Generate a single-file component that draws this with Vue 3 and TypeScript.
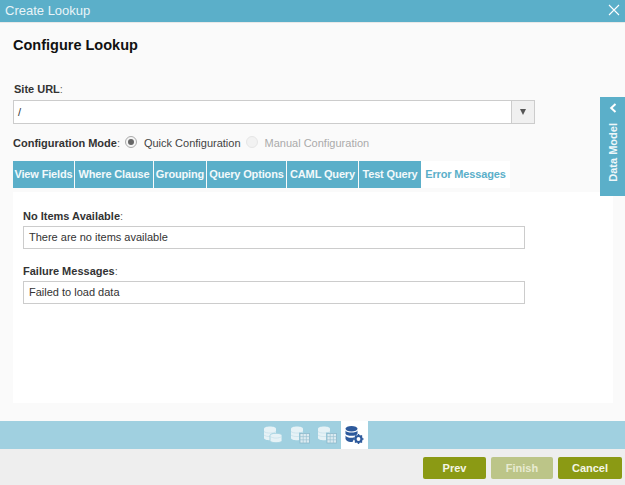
<template>
  <div class="dialog">
    <header class="titlebar">
      <span>Create Lookup</span>
      <svg class="close" width="12" height="12" viewBox="0 0 12 12">
        <path d="M1 1 L11 11 M11 1 L1 11" stroke="#fff" stroke-width="1.1" fill="none" />
      </svg>
    </header>

    <main class="body">
      <h2>Configure Lookup</h2>

      <label class="field-label site-label">Site URL<span class="colon">:</span></label>
      <div class="combo">
        <div class="combo-value">/</div>
        <div class="combo-btn"><i class="caret"></i></div>
      </div>

      <div class="mode-row">
        <span class="field-label">Configuration Mode<span class="colon">:</span></span>
        <span class="radio checked"><i></i></span>
        <span class="radio-text">Quick Configuration</span>
        <span class="radio disabled"></span>
        <span class="radio-text off">Manual Configuration</span>
      </div>

      <div class="tabs">
        <div
          v-for="tab in tabs"
          :key="tab.name"
          class="tab"
          :class="{ active: tab.name === activeTab }"
          :style="{ width: tab.width + 'px' }"
        >
          {{ tab.name }}
        </div>
      </div>

      <section class="panel">
        <div v-for="item in messages" :key="item.label" class="message">
          <div class="field-label">{{ item.label }}<span class="colon">:</span></div>
          <div class="text-input">{{ item.value }}</div>
        </div>
      </section>

      <aside class="data-model">
        <svg width="8" height="10" viewBox="0 0 8 10">
          <path d="M6.5 1 L2.2 5 L6.5 9" stroke="#fff" stroke-width="2" fill="none" />
        </svg>
        <span>Data Model</span>
      </aside>
    </main>

    <nav class="stepbar">
      <div v-for="step in 3" :key="step" class="step">
        <svg width="22" height="22" viewBox="0 0 22 22">
          <g fill="#e6f2f6">
            <path d="M2 5 C2 1.8 14 1.8 14 5 V14 C14 17 2 17 2 14 Z" />
          </g>
          <path d="M2 7.5 C4 9.6 12 9.6 14 7.5 M2 11 C4 13.1 12 13.1 14 11" stroke="#c4e0e9" stroke-width="0.7" fill="none" />
          <g v-if="step === 1">
            <path d="M8 11.5 C8 8.5 20 8.5 20 11.5 V16.5 C20 19.5 8 19.5 8 16.5 Z" fill="#e6f2f6" stroke="#a0d0e0" stroke-width="0.9" />
            <path d="M8.5 12.5 C10.5 14.6 17.5 14.6 19.5 12.5" stroke="#c4e0e9" stroke-width="0.7" fill="none" />
          </g>
          <g v-else>
            <rect x="10" y="8.5" width="11.5" height="11" fill="#a0d0e0" />
            <rect x="11" y="9.5" width="9.5" height="9.5" fill="#dcebf1" stroke="#86b4c6" stroke-width="0.7" />
            <path d="M14.2 9.5 V19 M17.4 9.5 V19 M11 12.6 H20.5 M11 15.8 H20.5" stroke="#9cc3d2" stroke-width="0.7" />
          </g>
        </svg>
      </div>
      <div class="step current">
        <svg width="22" height="22" viewBox="0 0 22 22">
          <g fill="#2e5a9c">
            <ellipse cx="8.5" cy="4.8" rx="6" ry="2.8" />
            <path d="M2.5 6.5 C3.5 9.3 13.5 9.3 14.5 6.5 V9.8 C13.5 12.5 3.5 12.5 2.5 9.8 Z" />
            <path d="M2.5 11.4 C3.5 14 10 14.2 12 13 L9.5 18 C6 18 3.5 17.5 2.5 15 Z" />
          </g>
          <circle cx="15.5" cy="15" r="3" fill="none" stroke="#2e5a9c" stroke-width="2.2" />
          <path d="M15.5 10 V12 M15.5 18 V20 M10.5 15 H12.5 M18.5 15 H20.5 M12 11.5 L13.4 12.9 M17.6 17.1 L19 18.5 M19 11.5 L17.6 12.9 M13.4 17.1 L12 18.5" stroke="#2e5a9c" stroke-width="1.5" />
        </svg>
      </div>
    </nav>

    <footer class="actions">
      <button type="button" class="btn prev">Prev</button>
      <button type="button" class="btn off">Finish</button>
      <button type="button" class="btn cancel">Cancel</button>
    </footer>
  </div>
</template>

<script setup lang="ts">
interface Tab {
  name: string
  width: number
}

const tabs: Tab[] = [
  { name: 'View Fields', width: 61 },
  { name: 'Where Clause', width: 78 },
  { name: 'Grouping', width: 52 },
  { name: 'Query Options', width: 79 },
  { name: 'CAML Query', width: 71 },
  { name: 'Test Query', width: 62 },
  { name: 'Error Messages', width: 89 }
]
const activeTab = 'Error Messages'

const messages = [
  { label: 'No Items Available', value: 'There are no items available' },
  { label: 'Failure Messages', value: 'Failed to load data' }
]
</script>

<style scoped>
.dialog {
  width: 625px;
  height: 485px;
  display: flex;
  flex-direction: column;
  overflow: hidden;
  background: #fafafa;
  font-family: "Liberation Sans", Arial, sans-serif;
  font-size: 11px;
  color: #333;
}

.titlebar {
  height: 23px;
  flex: none;
  display: flex;
  align-items: center;
  justify-content: space-between;
  padding: 0 5px 2px 5px;
  box-sizing: border-box;
  background: #5bafc9;
  border-bottom: 1px solid #e8e8e8;
  color: #e9f4f8;
  font-size: 13px;
}

.body {
  position: relative;
  flex: 1;
  padding: 0 0 0 13px;
  min-height: 0;
}

h2 {
  margin: 0;
  padding-top: 14px;
  height: 45px;
  font-size: 14.5px;
  line-height: 17px;
  color: #111;
}

.field-label {
  font-weight: bold;
  color: #333;
  line-height: 14px;
}

.colon {
  font-weight: normal;
  color: #666;
}

.site-label {
  display: block;
  padding-left: 1px;
  margin-bottom: 4px;
}

.combo {
  width: 522px;
  height: 24px;
  box-sizing: border-box;
  display: flex;
  border: 1px solid #ccc;
  background: #fff;
}

.combo-value {
  flex: 1;
  padding-left: 4px;
  line-height: 22px;
}

.combo-btn {
  width: 22px;
  display: flex;
  align-items: center;
  justify-content: center;
  background: #f0f0f0;
  border-left: 1px solid #ccc;
}

.caret {
  width: 0;
  height: 0;
  border-left: 3.5px solid transparent;
  border-right: 3.5px solid transparent;
  border-top: 6px solid #555;
}

.mode-row {
  display: flex;
  align-items: center;
  height: 18px;
  margin-top: 10px;
}

.radio {
  width: 12px;
  height: 12px;
  box-sizing: border-box;
  border-radius: 50%;
  border: 1px solid #aaa;
  background: #f5f5f5;
  display: flex;
  align-items: center;
  justify-content: center;
  margin-left: 5px;
  margin-top: -3px;
}

.radio i {
  width: 6px;
  height: 6px;
  border-radius: 50%;
  background: #666;
}

.radio.disabled {
  margin-left: 5px;
  background: #f2f2f2;
  border-color: #e6e6e6;
}

.radio-text {
  margin-left: 7px;
  color: #444;
}

.radio-text.off {
  color: #aaa;
}

.tabs {
  display: flex;
  gap: 1px;
  margin-top: 9px;
  height: 27px;
}

.tab {
  line-height: 27px;
  text-align: center;
  background: #5bafc9;
  color: #f2f9fb;
  font-weight: bold;
  letter-spacing: -0.15px;
  white-space: nowrap;
}

.tab.active {
  background: #fff;
  color: #5bafc9;
  margin-left: -1px;
  width: 90px;
}

.panel {
  height: 211px;
  margin-top: 4px;
  margin-right: 12px;
  padding: 17px 10px 0 10px;
  box-sizing: border-box;
  background: #fff;
}

.message {
  margin-bottom: 15px;
}

.text-input {
  width: 502px;
  height: 23px;
  margin-top: 3px;
  padding-left: 5px;
  box-sizing: border-box;
  border: 1px solid #ccc;
  line-height: 21px;
  background: #fff;
  color: #333;
}

.data-model {
  position: absolute;
  right: 0;
  top: 74px;
  width: 25px;
  height: 99px;
  display: flex;
  flex-direction: column;
  align-items: center;
  padding-top: 6px;
  box-sizing: border-box;
  background: #5bafc9;
  color: #eef7fa;
  font-weight: bold;
}

.data-model span {
  margin-top: 10px;
  writing-mode: vertical-rl;
  transform: rotate(180deg);
  line-height: 14px;
}

.stepbar {
  height: 28px;
  flex: none;
  display: flex;
  justify-content: center;
  padding-left: 2px;
  background: #a0d0e0;
}

.step {
  width: 27px;
  display: flex;
  align-items: center;
  justify-content: center;
}

.step.current {
  background: #fff;
}

.actions {
  height: 36px;
  flex: none;
  display: flex;
  justify-content: flex-end;
  gap: 5px;
  padding: 8px 3px 0 0;
  box-sizing: border-box;
  background: #eee;
}

.btn {
  width: 62px;
  height: 22px;
  padding: 0;
  border: none;
  border-radius: 2px;
  background: #8b9a14;
  color: #f4f6e6;
  font-family: inherit;
  font-size: 11px;
  font-weight: bold;
}

.btn.prev {
  width: 63px;
}

.btn.cancel {
  width: 64px;
}

.btn.off {
  background: #bcc588;
  color: #e8ebd2;
}
</style>
